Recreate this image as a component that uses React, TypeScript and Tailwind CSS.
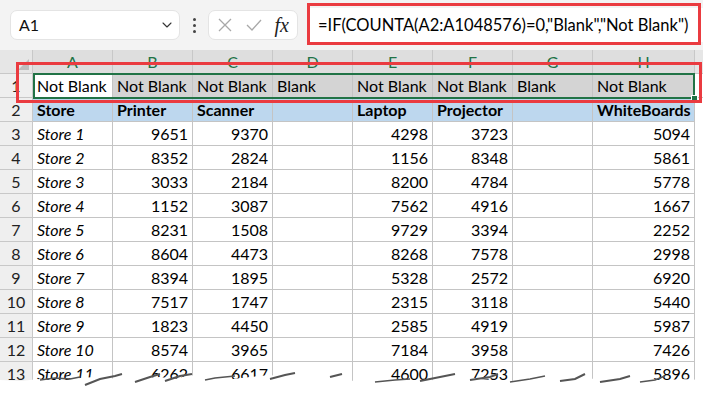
import { ChevronDown } from 'lucide-react';

const rows: [string, number, number, number, number, number][] = [
  ['Store 1', 9651, 9370, 4298, 3723, 5094],
  ['Store 2', 8352, 2824, 1156, 8348, 5861],
  ['Store 3', 3033, 2184, 8200, 4784, 5778],
  ['Store 4', 1152, 3087, 7562, 4916, 1667],
  ['Store 5', 8231, 1508, 9729, 3394, 2252],
  ['Store 6', 8604, 4473, 8268, 7578, 2998],
  ['Store 7', 8394, 1895, 5328, 2572, 6920],
  ['Store 8', 7517, 1747, 2315, 3118, 5440],
  ['Store 9', 1823, 4450, 2585, 4919, 5987],
  ['Store 10', 8574, 3965, 7184, 3958, 7426],
  ['Store 11', 6262, 6617, 4600, 7253, 5896],
];

const letters = ['A', 'B', 'C', 'D', 'E', 'F', 'G', 'H'];
const row1 = ['Not Blank', 'Not Blank', 'Not Blank', 'Blank', 'Not Blank', 'Not Blank', 'Blank', 'Not Blank'];
const headers = ['Store', 'Printer', 'Scanner', '', 'Laptop', 'Projector', '', 'WhiteBoards'];

const cell = 'h-[24px] border-r border-b border-[#c4c4c4] flex items-center px-[4px] text-[16px] leading-none text-black whitespace-nowrap overflow-hidden';
const rowHead = 'h-[24px] border-r border-b border-[#c8c8c8] bg-[#efefef] flex items-center justify-center text-[16px] leading-none text-[#222]';

function TopBar() {
  return (
    <div className="h-[50px] bg-[#f3f3f3] flex items-center pl-[10px] relative">
      <div className="w-[170px] h-[30px] bg-white rounded-[7px] border border-[#e4e4e4] flex items-center justify-between pl-[8px] pr-[4px] text-[16px] text-[#111]">
        <span>A1</span>
        <ChevronDown size={16} strokeWidth={1.6} className="text-[#333]" />
      </div>
      <div className="w-[28px] flex flex-col items-center gap-[3px]">
        <span className="w-[3px] h-[3px] bg-[#444] rounded-full" />
        <span className="w-[3px] h-[3px] bg-[#444] rounded-full" />
        <span className="w-[3px] h-[3px] bg-[#444] rounded-full" />
      </div>
      <div className="w-[90px] h-[30px] bg-white rounded-[7px] border border-[#e4e4e4] flex items-center justify-between px-[8px]">
        <svg width="16" height="16" viewBox="0 0 16 16"><path d="M2 2L14 14M14 2L2 14" stroke="#a8a8a8" strokeWidth="1.3" fill="none" /></svg>
        <svg width="18" height="16" viewBox="0 0 18 16"><path d="M2 8L7 13L16 3" stroke="#a8a8a8" strokeWidth="1.3" fill="none" /></svg>
        <span className="text-[20px] italic text-[#222] leading-none" style={{ fontFamily: '"Liberation Serif", serif' }}>fx</span>
      </div>
      <div className="flex-1 h-[34px] ml-[9px] bg-white flex items-center pl-[11px] text-[16.5px] text-black whitespace-nowrap">
        =IF(COUNTA(A2:A1048576)=0,"Blank","Not Blank")
      </div>
      <div className="absolute left-[307px] top-[3px] w-[394px] h-[42px] border-[3px] border-[#ea3b40]" />
    </div>
  );
}

function Torn() {
  return (
    <svg className="absolute left-0 top-[372px]" width="703" height="25" viewBox="0 0 703 25">
      <path
        d="M0 8 L20 9 L40 7 L60 9 L80 6 L95 5 L110 7 L125 4 L140 6 L160 5 L175 7 L190 3 L205 6 L225 8 L250 5 L270 3 L290 6 L310 8 L330 6 L350 9 L375 7 L400 8 L425 10 L445 5 L460 3 L480 7 L505 9 L530 8 L555 10 L580 8 L600 6 L620 10 L640 8 L660 9 L680 7 L703 8 L703 25 L0 25 Z"
        fill="#ffffff"
      />
      <path d="M40 8 L55 6 L70 7 L80 5" stroke="#555" strokeWidth="1.5" fill="none" />
      <path d="M85 13 L100 7 L115 4 L122 2" stroke="#555" strokeWidth="2" fill="none" />
      <path d="M135 10 L150 5 L160 2" stroke="#555" strokeWidth="2" fill="none" />
      <path d="M165 9 L180 4 L192 2" stroke="#555" strokeWidth="2" fill="none" />
      <path d="M205 8 L215 6 L235 4" stroke="#555" strokeWidth="1.5" fill="none" />
      <path d="M270 7 L285 3 L295 1" stroke="#555" strokeWidth="2" fill="none" />
      <path d="M330 5 L342 2" stroke="#555" strokeWidth="2" fill="none" />
      <path d="M375 10 L395 8 L410 7" stroke="#555" strokeWidth="1.5" fill="none" />
      <path d="M420 9 L440 5 L455 2" stroke="#555" strokeWidth="2" fill="none" />
      <path d="M470 8 L490 5 L498 2" stroke="#555" strokeWidth="2" fill="none" />
      <path d="M510 10 L530 7 L545 4" stroke="#555" strokeWidth="1.5" fill="none" />
      <path d="M560 9 L575 7 L585 2" stroke="#555" strokeWidth="2" fill="none" />
      <path d="M600 10 L620 7 L630 4" stroke="#555" strokeWidth="2" fill="none" />
      <path d="M640 10 L655 8 L665 4" stroke="#555" strokeWidth="1.5" fill="none" />
    </svg>
  );
}

export default function App() {
  return (
    <div className="w-[703px] h-[397px] bg-white overflow-hidden relative" style={{ fontFamily: 'Lato, "Liberation Sans", sans-serif' }}>
      <TopBar />
      <div className="grid grid-cols-[33px_repeat(7,80px)_102px_1fr]">
        {/* column headers */}
        <div className="h-[24px] bg-[#e6e6e6] border-r border-b border-[#c8c8c8] flex items-end justify-end p-[3px]">
          <div className="w-0 h-0 border-l-[11px] border-l-transparent border-b-[11px] border-b-[#bdbdbd]" />
        </div>
        {letters.map((l) => (
          <div key={l} className="h-[24px] bg-[#dedede] border-r border-b border-[#c8c8c8] flex items-center justify-center text-[16px] text-[#217346]">
            {l}
          </div>
        ))}
        <div className="h-[24px] bg-[#e6e6e6] border-b border-[#c8c8c8]" />

        {/* row 1 */}
        <div className={rowHead + ' bg-[#d2d2d2]'}>1</div>
        {row1.map((t, i) => (
          <div key={i} className={cell + (i === 0 ? ' bg-white' : ' bg-[#d4d4d4]')}>{t}</div>
        ))}
        <div className="h-[24px] border-b border-[#c4c4c4]" />

        {/* row 2 */}
        <div className={rowHead}>2</div>
        {headers.map((t, i) => (
          <div key={i} className={cell + ' bg-[#bdd7ee] font-bold'}>{t}</div>
        ))}
        <div className="h-[24px]" />

        {rows.map((r, idx) => {
          const vals = [r[1], r[2], null, r[3], r[4], null, r[5]];
          return (
            <div key={idx} className="contents">
              <div className={rowHead}>{idx + 3}</div>
              <div className={cell + ' italic'}>{r[0]}</div>
              {vals.map((v, j) => (
                <div key={j} className={cell + ' justify-end'}>{v ?? ''}</div>
              ))}
              <div className="h-[24px]" />
            </div>
          );
        })}
      </div>

      {/* selection A1:H1 */}
      <div className="absolute left-[33px] top-[73px] w-[662px] h-[26px] border-2 border-[#217346]">
        <div className="absolute right-[-5px] bottom-[-5px] w-[7px] h-[7px] bg-[#217346] border border-white" />
      </div>
      {/* annotation around row 1 */}
      <div className="absolute left-[16px] top-[62px] w-[686px] h-[41px] border-[3px] border-[#ea3b40]" />
      <Torn />
    </div>
  );
}
